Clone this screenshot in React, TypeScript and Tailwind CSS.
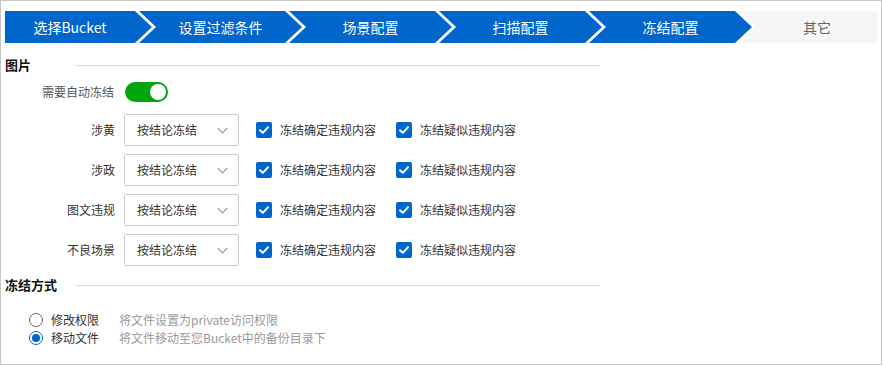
import React from "react";

const steps = ["选择Bucket", "设置过滤条件", "场景配置", "扫描配置", "冻结配置"];
const rows = ["涉黄", "涉政", "图文违规", "不良场景"];

function Check() {
  return (
    <span className="flex h-4 w-4 items-center justify-center rounded-[2px] bg-[#0066cc]">
      <svg width="12" height="12" viewBox="0 0 12 12" fill="none">
        <path d="M2 6.2 L4.8 8.9 L10 3.3" stroke="white" strokeWidth="2" strokeLinecap="round" strokeLinejoin="round" />
      </svg>
    </span>
  );
}

function Heading({ title }: { title: string }) {
  return (
    <div className="flex h-4 w-[596px] items-center">
      <span className="w-[70px] text-[13px] font-bold leading-4 text-[#111]">{title}</span>
      <span className="h-px flex-1 bg-[#dcdcdc]" />
    </div>
  );
}

export default function App() {
  return (
    <div className="h-[365px] w-[882px] border border-[#c6c6c6] bg-white px-1 pt-[10px] font-['Noto_Sans_CJK_SC','Microsoft_YaHei',sans-serif]">
      <div className="flex h-8 w-[873px]">
        {steps.map((s, i) =>
          i === 0 ? (
            <div
              key={s}
              className="flex h-8 w-[147px] shrink-0 items-center justify-center bg-[#0066cc] pr-[17px] text-[14px] text-white [clip-path:polygon(0_0,calc(100%_-_17px)_0,100%_50%,calc(100%_-_17px)_100%,0_100%)]"
            >
              {s}
            </div>
          ) : (
            <div
              key={s}
              className="-ml-[13px] flex h-8 w-[163px] shrink-0 items-center justify-center bg-[#0066cc] px-[17px] text-[14px] text-white [clip-path:polygon(0_0,calc(100%_-_17px)_0,100%_50%,calc(100%_-_17px)_100%,0_100%,17px_50%)]"
            >
              {s}
            </div>
          )
        )}
        <div className="-ml-[13px] flex h-8 flex-1 items-center justify-center bg-[#f5f6f8] pl-[17px] text-[14px] text-[#666] [clip-path:polygon(0_0,100%_0,100%_100%,0_100%,17px_50%)]">
          其它
        </div>
      </div>

      <div className="mt-[14px]">
        <Heading title="图片" />
      </div>

      <div className="mt-[9px] flex h-5 items-center">
        <span className="w-[109px] text-right text-[12px] text-[#555]">需要自动冻结</span>
        <span className="ml-[11px] flex h-5 w-[43px] items-center justify-end rounded-full bg-[#00a60e] pr-[2px]">
          <span className="h-4 w-4 rounded-full bg-white" />
        </span>
      </div>

      <div className="mt-3 flex flex-col gap-2">
        {rows.map((r) => (
          <div key={r} className="flex h-8 items-center">
            <span className="w-[110px] text-right text-[12px] text-[#333]">{r}</span>
            <div className="ml-[9px] flex h-8 w-[115px] items-center justify-between rounded-[2px] border border-[#c8ccd2] pl-3 pr-[10px]">
              <span className="text-[12px] text-[#333]">按结论冻结</span>
              <svg width="11" height="7" viewBox="0 0 11 7" fill="none">
                <path d="M0.5 0.8 L5.5 5.8 L10.5 0.8" stroke="#999" strokeWidth="1.2" />
              </svg>
            </div>
            <div className="ml-[17px] flex w-[140px] items-center">
              <Check />
              <span className="ml-2 text-[12px] text-[#333]">冻结确定违规内容</span>
            </div>
            <div className="flex items-center">
              <Check />
              <span className="ml-2 text-[12px] text-[#333]">冻结疑似违规内容</span>
            </div>
          </div>
        ))}
      </div>

      <div className="mt-[11px]">
        <Heading title="冻结方式" />
      </div>

      <div className="mt-[18px] flex flex-col pl-6">
        <div className="flex h-[18px] items-center">
          <span className="h-[14px] w-[14px] rounded-full border border-[#666] bg-white" />
          <span className="ml-2 w-[68px] text-[12px] text-[#333]">修改权限</span>
          <span className="text-[12px] text-[#999]">将文件设置为private访问权限</span>
        </div>
        <div className="flex h-[18px] items-center">
          <span className="flex h-[14px] w-[14px] items-center justify-center rounded-full border border-[#0066cc] bg-white">
            <span className="h-2 w-2 rounded-full bg-[#0066cc]" />
          </span>
          <span className="ml-2 w-[68px] text-[12px] text-[#333]">移动文件</span>
          <span className="text-[12px] text-[#999]">将文件移动至您Bucket中的备份目录下</span>
        </div>
      </div>
    </div>
  );
}
